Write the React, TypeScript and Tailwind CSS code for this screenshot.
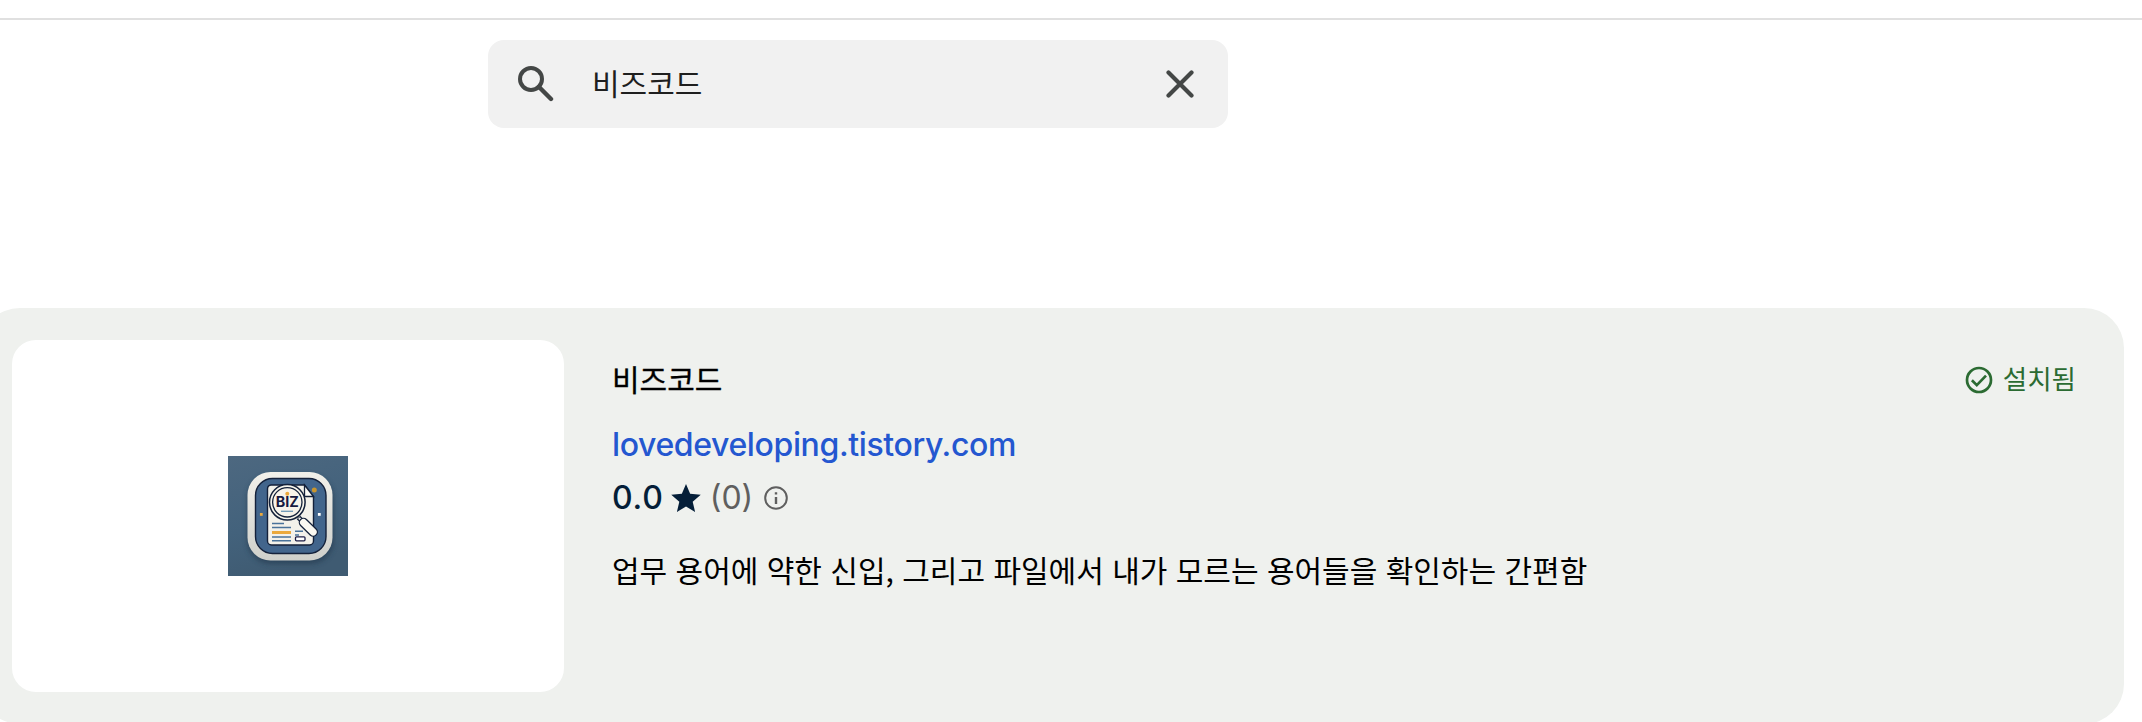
type IconProps = { className?: string };

function SearchIcon({ className }: IconProps) {
  return (
    <svg viewBox="0 0 36 36" className={className} fill="none" stroke="currentColor" strokeWidth="4">
      <circle cx="13" cy="13" r="11" />
      <path d="M20.8 20.8 33 33" strokeWidth="4.4" strokeLinecap="round" />
    </svg>
  );
}

function CloseIcon({ className }: IconProps) {
  return (
    <svg viewBox="0 0 28 28" className={className} fill="none" stroke="currentColor" strokeWidth="4.2" strokeLinecap="round">
      <path d="M2.5 2.5 25.5 25.5M25.5 2.5 2.5 25.5" />
    </svg>
  );
}

function InstalledIcon({ className }: IconProps) {
  return (
    <svg viewBox="0 0 28 28" className={className} fill="none" stroke="currentColor" strokeWidth="2.7">
      <circle cx="14" cy="14" r="12" />
      <path d="m6.9 14.2 4.9 4.9 9.2-9.5" />
    </svg>
  );
}

function StarIcon({ className }: IconProps) {
  return (
    <svg viewBox="2 2 20 19" className={className} fill="currentColor">
      <path d="M12 17.27 18.18 21l-1.64-7.03L22 9.24l-7.19-.61L12 2 9.19 8.63 2 9.24l5.46 4.73L5.82 21z" />
    </svg>
  );
}

function InfoIcon({ className }: IconProps) {
  return (
    <svg viewBox="0 0 24 24" className={className} fill="none" stroke="currentColor">
      <circle cx="12" cy="12" r="10.8" strokeWidth="2" />
      <path d="M12 11v7M12 6.2v2.4" strokeWidth="2.4" />
    </svg>
  );
}

/** App logo: a magnifier reading a document inside a rounded tile. */
function BizLogo({ className }: IconProps) {
  return (
    <svg viewBox="0 0 120 120" className={className}>
      <defs>
        <linearGradient id="backdrop" x1="0" y1="0" x2="0.3" y2="1">
          <stop offset="0" stopColor="#4d6880" />
          <stop offset="0.6" stopColor="#43627c" />
          <stop offset="1" stopColor="#3f5b72" />
        </linearGradient>
        <linearGradient id="frame" x1="0" y1="0" x2="0" y2="1">
          <stop offset="0" stopColor="#f1f0ea" />
          <stop offset="1" stopColor="#cfd0cb" />
        </linearGradient>
        <filter id="shade" x="-20%" y="-20%" width="140%" height="140%">
          <feGaussianBlur stdDeviation="2.5" />
        </filter>
      </defs>
      <rect width="120" height="120" fill="url(#backdrop)" />
      <rect x="19" y="19" width="87" height="89" rx="24" fill="#22384d" opacity="0.6" filter="url(#shade)" />
      <rect x="19.5" y="16" width="85" height="88.5" rx="23" fill="url(#frame)" />
      <rect x="27.5" y="22.5" width="70.5" height="75" rx="17" fill="#42658c" stroke="#14213a" strokeWidth="1.4" />

      <path
        d="M43 29h33.5l9 11.5V85a4 4 0 0 1-4 4h-38a4 4 0 0 1-4-4V33a4 4 0 0 1 3.5-4z"
        fill="#f3f1ea"
        stroke="#14213a"
        strokeWidth="1.4"
      />
      <path d="M76.5 29v11.5h9z" fill="#fbfaf5" stroke="#14213a" strokeWidth="1.3" />
      <path d="M44 67.5h12M44 71.5h19M44 81h19M44 84.8h19M67 75.3h8M67 79h4" stroke="#49729a" strokeWidth="1.5" />
      <path d="M44 76.5h19" stroke="#eba93c" strokeWidth="3" />
      <rect x="67.5" y="80.8" width="9.5" height="4" rx="1" fill="#fff" stroke="#1c1d46" strokeWidth="1.3" />

      <path d="m70.5 61.5 5 5" stroke="#14213a" strokeWidth="5" />
      <path d="m71 62 5 5" stroke="#f3f1ea" strokeWidth="2.4" />
      <path d="M75.5 66.5 85.2 76" stroke="#14213a" strokeWidth="9.6" strokeLinecap="round" />
      <path d="M75.5 66.5 85.2 76" stroke="#faf8f1" strokeWidth="7" strokeLinecap="round" />

      <circle cx="59.3" cy="46.3" r="17.8" fill="#f8f5ec" stroke="#14213a" strokeWidth="1.5" />
      <circle cx="59.3" cy="46.3" r="14.7" fill="#f7f3ea" stroke="#14213a" strokeWidth="1.3" />
      <circle cx="59.3" cy="37.7" r="2" fill="#eba93c" />
      <text
        x="59.2"
        y="51.2"
        textAnchor="middle"
        textLength="23"
        lengthAdjust="spacingAndGlyphs"
        fill="#161a40"
        className="font-['Inter'] text-[14.5px] font-bold"
      >
        BIZ
      </text>
      <path d="M53 55.3h12" stroke="#6d96b5" strokeWidth="1.3" />

      <circle cx="86.3" cy="34" r="2.5" fill="#c8952f" />
      <rect x="31.9" y="57" width="2.8" height="2.8" fill="#eba93c" />
      <rect x="89.9" y="57" width="2.8" height="2.8" fill="#fff" />
    </svg>
  );
}

function SearchBar({ query }: { query: string }) {
  return (
    <div className="ml-[488px] mt-5 flex h-[88px] w-[740px] shrink-0 items-center rounded-2xl bg-[#f1f1f1] pl-[30px] pr-[34px]">
      <SearchIcon className="size-9 text-[#444746]" />
      <span className="ml-[38px] flex-1 pb-[5px] text-[30px] leading-10 text-[#1f1f1f]">{query}</span>
      <CloseIcon className="size-7 text-[#444746]" />
    </div>
  );
}

function ResultCard() {
  return (
    <article className="-ml-5 mt-[180px] flex h-[416px] w-[2144px] shrink-0 rounded-[40px] bg-[#eff1ee] p-8 pr-12">
      <div className="flex h-[352px] w-[552px] shrink-0 items-center justify-center rounded-3xl bg-white">
        <BizLogo className="size-[120px]" />
      </div>
      <div className="ml-12 flex-1 pt-5">
        <div className="flex h-10 items-center justify-between">
          <h2 className="pb-[5px] text-[30px] leading-10 text-black [-webkit-text-stroke:0.3px_black]">비즈코드</h2>
          <div className="flex items-center gap-[10px] text-[#2b6b32]">
            <InstalledIcon className="size-7" />
            <span className="pb-1 text-[26.5px] leading-10">설치됨</span>
          </div>
        </div>
        <a className="mt-[25px] block w-fit font-['Inter'] text-[32px] font-medium leading-10 tracking-[-0.38px] text-[#2457d0]">
          lovedeveloping.tistory.com
        </a>
        <div className="mt-[13px] flex h-10 items-center font-['Inter'] text-[32px] leading-10">
          <span className="font-medium tracking-[0.8px] text-[#041e38]">0.0</span>
          <StarIcon className="ml-[7px] h-7 w-[30px] text-[#041e38]" />
          <span className="ml-[9px] text-[#5f5f5f]">(0)</span>
          <InfoIcon className="ml-[11px] size-6 text-[#5f5f5f]" />
        </div>
        <p className="mt-[31px] whitespace-nowrap text-[30px] leading-10 text-black [word-spacing:1.65px]">
          업무 용어에 약한 신입, 그리고 파일에서 내가 모르는 용어들을 확인하는 간편함
        </p>
      </div>
    </article>
  );
}

export default function App() {
  return (
    <main className="flex h-[722px] w-full flex-col overflow-hidden bg-white pt-[18px] font-['Noto_Sans_CJK_KR',sans-serif]">
      <div className="h-0.5 shrink-0 bg-[#e0e0e0]" />
      <SearchBar query="비즈코드" />
      <ResultCard />
    </main>
  );
}
